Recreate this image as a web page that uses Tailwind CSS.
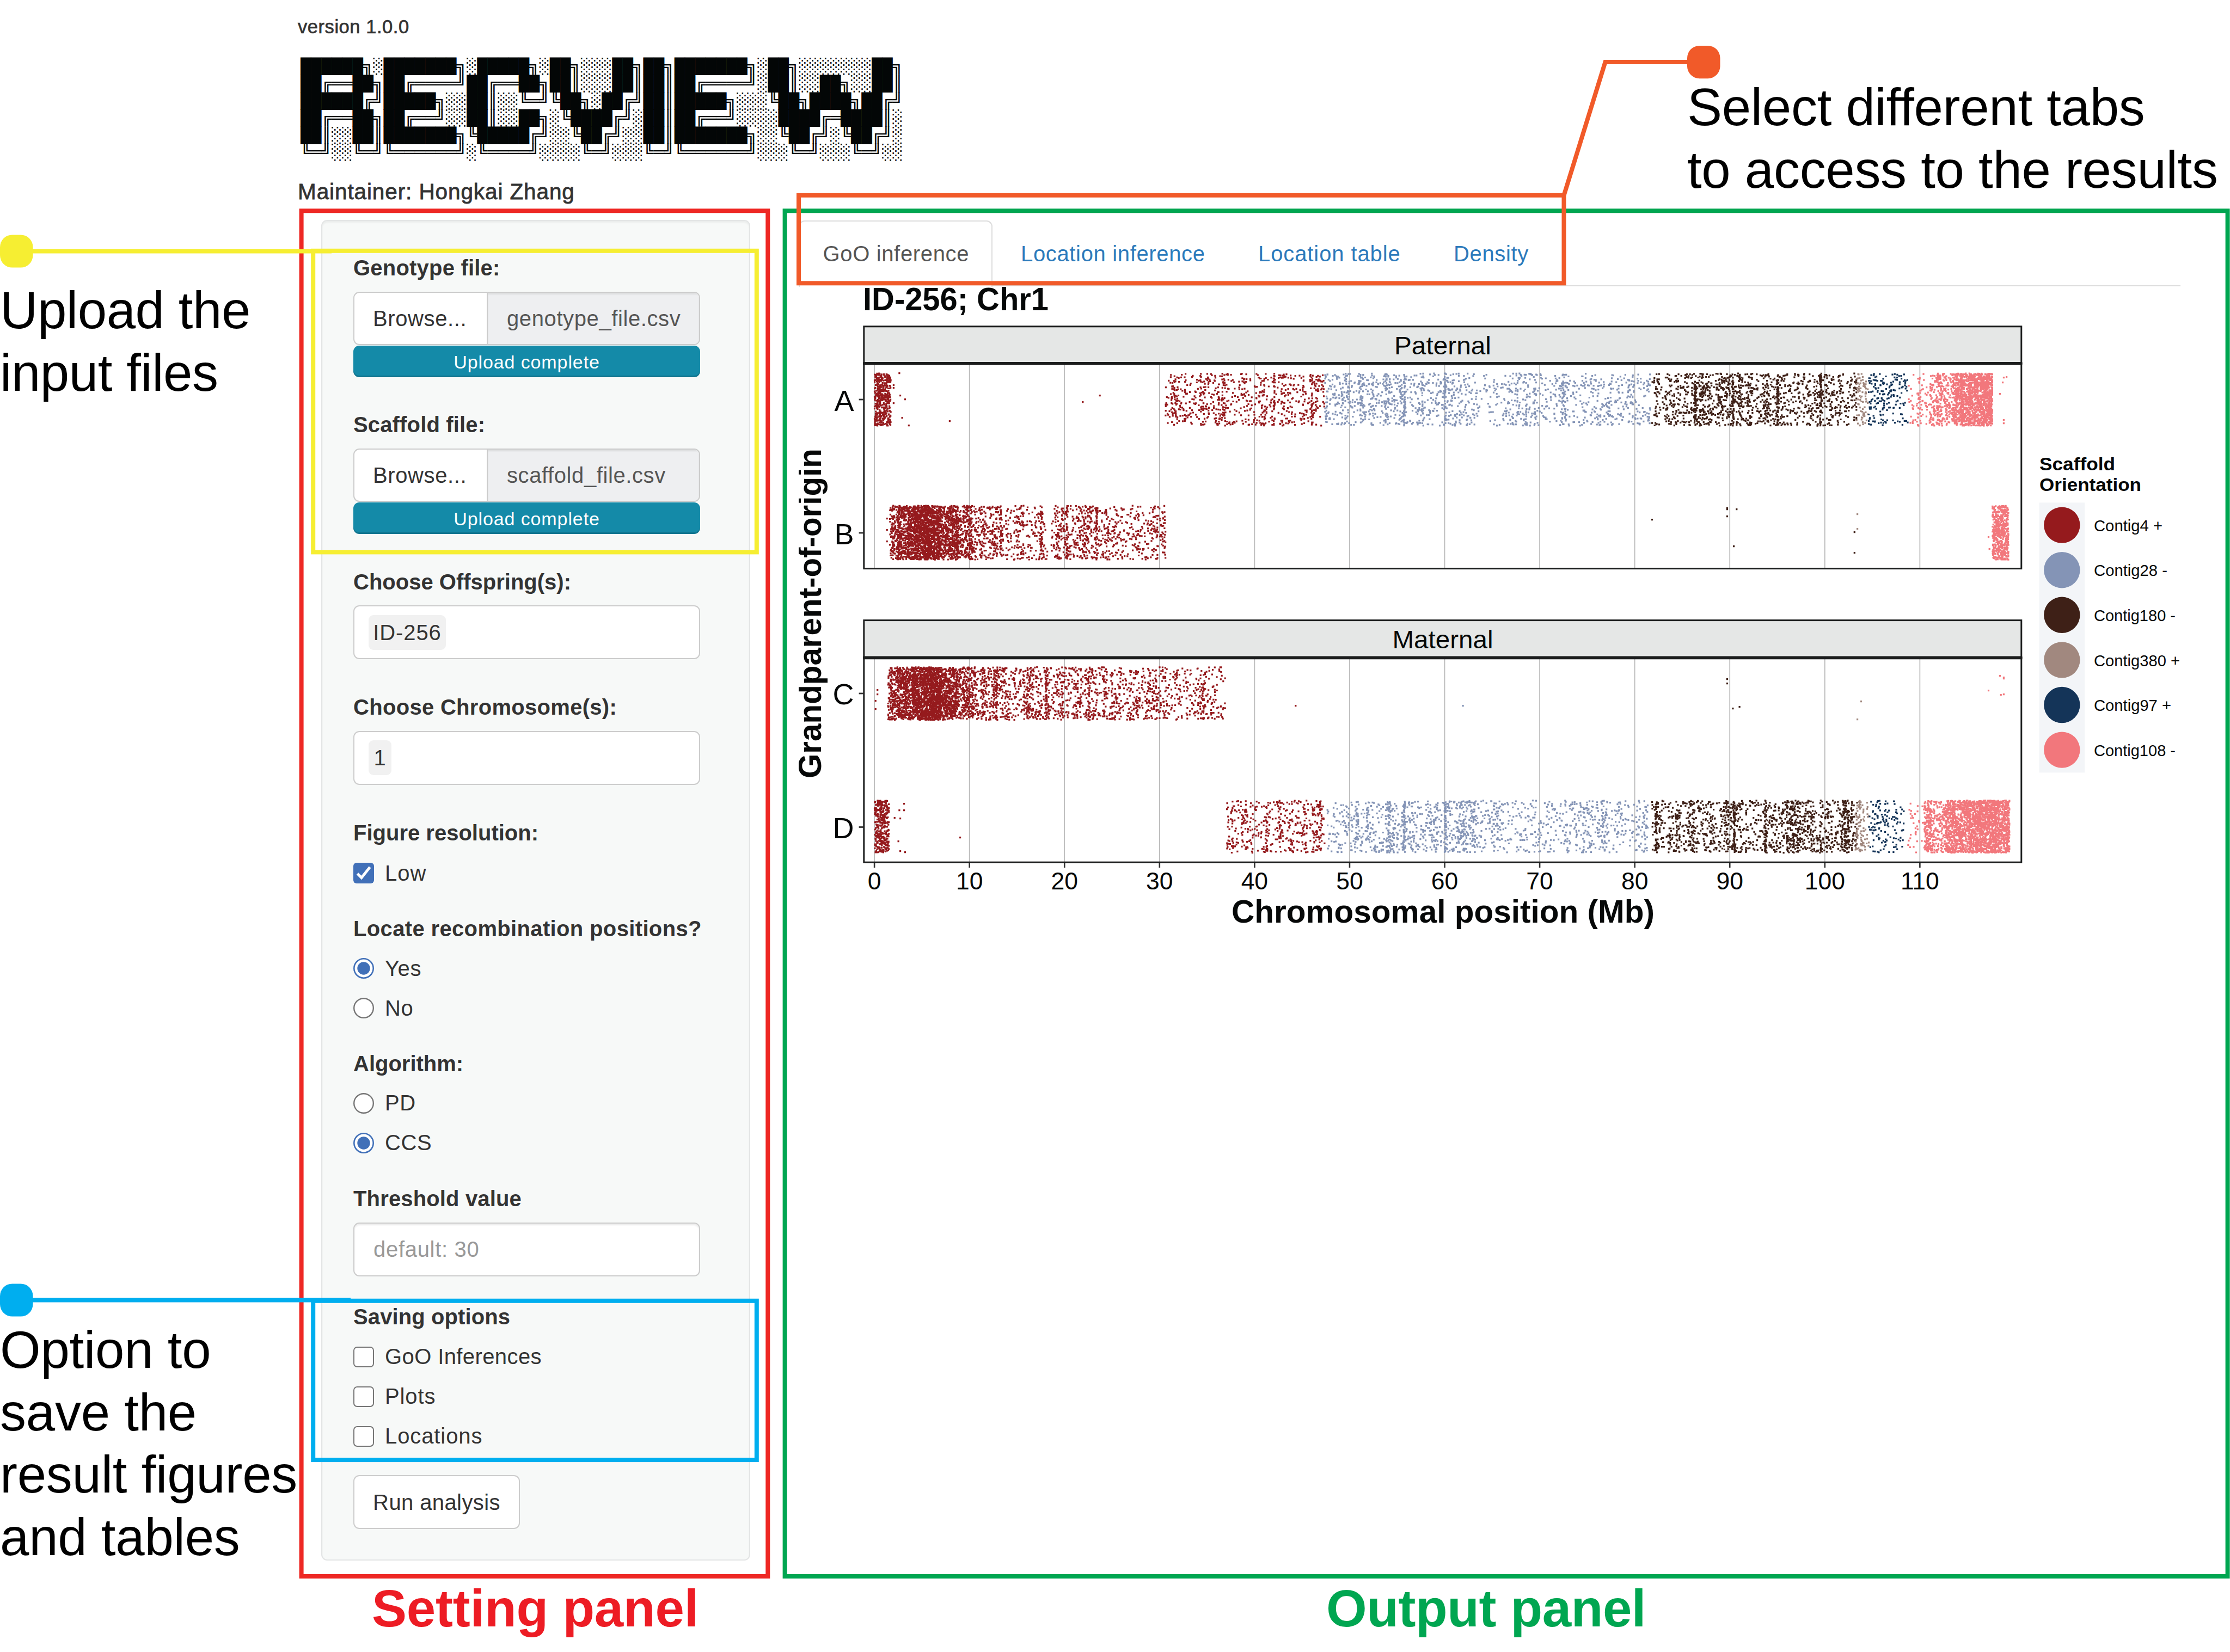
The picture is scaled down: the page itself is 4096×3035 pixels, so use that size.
<!DOCTYPE html>
<html lang="en">
<head>
<meta charset="utf-8">
<title>RecView</title>
<script src="https://cdn.jsdelivr.net/npm/@tailwindcss/browser@4"></script>
</head>
<body class="relative h-[3035px] w-[4096px] overflow-hidden bg-white font-['Liberation_Sans',Arial,sans-serif] text-[40px] leading-[57px] whitespace-nowrap text-[#333]">

<!-- Application page -->
<div class="pl-[547px]">
  <header class="h-[383px]">
    <h5 class="pt-[27px] text-[34.5px] leading-[44px] tracking-[0.55px] [-webkit-text-stroke:0.7px_#333]">version 1.0.0</h5>
    <div class="mt-[35px] ml-[5px] h-[190px]">
<pre class="origin-top-left scale-y-[0.861] font-['DejaVu_Sans_Mono',monospace] text-[31.69px] leading-[36.83px] text-[#030606]">██████╗░███████╗░█████╗░██╗░░░██╗██╗███████╗░██╗░░░░░░░██╗
██╔══██╗██╔════╝██╔══██╗██║░░░██║██║██╔════╝░██║░░██╗░░██║
██████╔╝█████╗░░██║░░╚═╝╚██╗░██╔╝██║█████╗░░░╚██╗████╗██╔╝
██╔══██╗██╔══╝░░██║░░██╗░╚████╔╝░██║██╔══╝░░░░████╔═████║░
██║░░██║███████╗╚█████╔╝░░╚██╔╝░░██║███████╗░░╚██╔╝░╚██╔╝░
╚═╝░░╚═╝╚══════╝░╚════╝░░░░╚═╝░░░╚═╝╚══════╝░░░╚═╝░░░╚═╝░░</pre>
    </div>
    <h4 class="pt-[28px] text-[40.5px] leading-[56px] tracking-[0.9px] [-webkit-text-stroke:0.8px_#333]">Maintainer: Hongkai Zhang</h4>
  </header>

  <div class="flex items-start pt-[21px]">
    <!-- Settings -->
    <form class="ml-[43px] h-[2463px] w-[788px] shrink-0 rounded-[11px] border-[2.5px] border-[#e3e5e5] bg-[#f7f9f8] pt-[54px] pl-[57px] tracking-[0.6px] shadow-[inset_0_3px_3px_rgba(0,0,0,0.05)]">
      <div class="h-[288.4px]">
        <label class="block h-[75.5px] pt-[4px] font-bold tracking-[0.2px]">Genotype file:</label>
        <div class="flex h-[98px] w-[637px] overflow-hidden rounded-[11px] border-[2.8px] border-[#ccc] bg-white leading-[94px]">
          <span class="w-[245px] shrink-0 border-r-[2.8px] border-[#ccc] pl-[34px] tracking-[0.6px]">Browse...</span>
          <span class="flex-1 bg-[#eeeff1] pl-[35px] text-[#555] shadow-[inset_0_3px_3px_rgba(0,0,0,0.075)]">genotype_file.csv</span>
        </div>
        <div class="mt-px h-[58px] w-[637px] rounded-[11px] bg-[#148aa8] text-center text-[34px] leading-[60px] tracking-[0.9px] text-white shadow-[inset_0_-3px_0_rgba(0,0,0,0.15)]">Upload complete</div>
      </div>
      <div class="h-[288.4px]">
        <label class="block h-[75.5px] pt-[4px] font-bold tracking-[0.15px]">Scaffold file:</label>
        <div class="flex h-[98px] w-[637px] overflow-hidden rounded-[11px] border-[2.8px] border-[#ccc] bg-white leading-[94px]">
          <span class="w-[245px] shrink-0 border-r-[2.8px] border-[#ccc] pl-[34px] tracking-[0.6px]">Browse...</span>
          <span class="flex-1 bg-[#eeeff1] pl-[35px] text-[#555] shadow-[inset_0_3px_3px_rgba(0,0,0,0.075)]">scaffold_file.csv</span>
        </div>
        <div class="mt-px h-[58px] w-[637px] rounded-[11px] bg-[#148aa8] text-center text-[34px] leading-[60px] tracking-[0.9px] text-white shadow-[inset_0_-3px_0_rgba(0,0,0,0.15)]">Upload complete</div>
      </div>
      <div class="h-[230.6px]">
        <label class="block h-[75.5px] pt-[4px] font-bold tracking-normal">Choose Offspring(s):</label>
        <div class="flex h-[99px] w-[637px] items-center rounded-[11px] border-[2.8px] border-[#ccc] bg-white pl-[26px]"><span class="h-[64px] w-[142px] rounded-[9px] bg-[#f1f1f1] text-center leading-[65px] tracking-[0.9px]">ID-256</span></div>
      </div>
      <div class="h-[230.7px]">
        <label class="block h-[75.5px] pt-[4px] font-bold tracking-[0.3px]">Choose Chromosome(s):</label>
        <div class="flex h-[99px] w-[637px] items-center rounded-[11px] border-[2.8px] border-[#ccc] bg-white pl-[26px]"><span class="h-[64px] w-[42px] rounded-[9px] bg-[#f1f1f1] text-center leading-[65px]">1</span></div>
      </div>
      <div class="h-[176px]">
        <label class="block h-[77.5px] pt-[4px] font-bold tracking-normal">Figure resolution:</label>
        <div class="flex items-center gap-[20px] tracking-[1px]">
          <svg class="size-[38px]" viewBox="0 0 38 38"><rect width="38" height="38" rx="6" fill="#4170b8"/><path d="M7.500 20L15 27.500L30.500 8" fill="none" stroke="#fff" stroke-width="5"/></svg>Low
        </div>
      </div>
      <div class="h-[248.8px]">
        <label class="block h-[76.7px] pt-[3.5px] font-bold tracking-[0.35px]">Locate recombination positions?</label>
        <div class="flex h-[57px] items-center gap-[20px]"><svg class="size-[38px]" viewBox="0 0 38 38"><circle cx="19" cy="19" r="17.7" fill="#fff" stroke="#4170b8" stroke-width="2.6"/><circle cx="19" cy="19" r="11.7" fill="#4170b8"/></svg>Yes</div>
        <div class="mt-[16px] flex h-[57px] items-center gap-[20px]"><svg class="size-[38px]" viewBox="0 0 38 38"><circle cx="19" cy="19" r="17.8" fill="#fff" stroke="#767676" stroke-width="2.4"/></svg>No</div>
      </div>
      <div class="h-[248.1px]">
        <label class="block h-[75.3px] pt-[3px] font-bold tracking-normal">Algorithm:</label>
        <div class="flex h-[57px] items-center gap-[20px]"><svg class="size-[38px]" viewBox="0 0 38 38"><circle cx="19" cy="19" r="17.8" fill="#fff" stroke="#767676" stroke-width="2.4"/></svg>PD</div>
        <div class="mt-[16px] flex h-[57px] items-center gap-[20px]"><svg class="size-[38px]" viewBox="0 0 38 38"><circle cx="19" cy="19" r="17.7" fill="#fff" stroke="#4170b8" stroke-width="2.6"/><circle cx="19" cy="19" r="11.7" fill="#4170b8"/></svg>CCS</div>
      </div>
      <div class="h-[217.1px]">
        <label class="block h-[75.5px] pt-[3.5px] font-bold tracking-[0.15px]">Threshold value</label>
        <div class="h-[99px] w-[637px] rounded-[11px] border-[2.8px] border-[#ccc] bg-white pl-[35px] leading-[94px] tracking-[0.7px] text-[#999] shadow-[inset_0_3px_3px_rgba(0,0,0,0.075)]">default: 30</div>
      </div>
      <div class="h-[322px]">
        <label class="block h-[76px] pt-[3px] font-bold tracking-[0.1px]">Saving options</label>
        <div class="flex h-[57px] items-center gap-[20px] tracking-[0.4px]"><span class="size-[38px] rounded-[7px] border-[2.6px] border-[#767676] bg-white"></span>GoO Inferences</div>
        <div class="mt-[16px] flex h-[57px] items-center gap-[20px] tracking-[0.9px]"><span class="size-[38px] rounded-[7px] border-[2.6px] border-[#767676] bg-white"></span>Plots</div>
        <div class="mt-[16px] flex h-[57px] items-center gap-[20px] tracking-[0.9px]"><span class="size-[38px] rounded-[7px] border-[2.6px] border-[#767676] bg-white"></span>Locations</div>
      </div>
      <button type="button" class="block h-[99px] w-[306px] rounded-[11px] border-[2.8px] border-[#ccc] bg-white leading-[94px] tracking-[0.4px]">Run analysis</button>
    </form>

    <!-- Results -->
    <main class="ml-[89px] w-[2538px]">
      <nav class="flex h-[122px] items-end border-b-[2.8px] border-[#ddd] leading-[123px] tracking-[0.65px] text-[#2c7abb]">
        <a class="-mb-[2.8px] h-[122px] w-[356px] rounded-t-[11px] border-[2.8px] border-b-0 border-[#ddd] bg-white pl-[42.5px] leading-[118px] text-[#555]">GoO inference</a>
        <a class="ml-[52px] h-[119px] w-[436px]">Location inference</a>
        <a class="h-[119px] w-[359px] tracking-[0.9px]">Location table</a>
        <a class="h-[119px]">Density</a>
      </nav>
      <svg id="plot" class="block h-[1184px] w-[2559px] font-['Liberation_Sans',Arial,sans-serif]" viewBox="1467 526 2559 1184"></svg>
    </main>
  </div>
</div>

<!-- Figure annotations -->
<svg class="absolute inset-0 h-[3035px] w-[4096px]" viewBox="0 0 4096 3035" fill="none" stroke-width="8">
  <rect x="553.6" y="387.3" width="856.7" height="2508.7" stroke="#ee2824"/>
  <rect x="1441.6" y="387.3" width="2650" height="2508.7" stroke="#00a651"/>
  <rect x="575.2" y="460.8" width="814.6" height="553.6" stroke="#f6ee32"/>
  <path d="M30 461.5H609" stroke="#f6ee32"/>
  <rect x="0" y="431.4" width="60.5" height="60.2" rx="22.5" fill="#f6ee32"/>
  <rect x="575.2" y="2389.8" width="814.6" height="292.3" stroke="#00aeef"/>
  <path d="M30 2388.5H644" stroke="#00aeef"/>
  <rect x="0" y="2358.4" width="60.5" height="60.2" rx="22.5" fill="#00aeef"/>
  <rect x="1467" y="358.8" width="1405.500" height="161.500" stroke="#f15a29"/>
  <path d="M2872.500 359L2948.500 114H3130" stroke="#f15a29"/>
  <rect x="3099" y="84" width="60.5" height="60.2" rx="22.5" fill="#f15a29"/>
</svg>
<p class="absolute top-[513px] left-0 text-[96px] leading-[114.5px] tracking-[-0.45px] whitespace-pre text-black">Upload the
input files</p>
<p class="absolute top-[2423px] left-0 text-[96px] leading-[114.5px] tracking-[-0.25px] whitespace-pre text-black">Option to
save the
result figures
and tables</p>
<p class="absolute top-[140px] left-[3099px] text-[96px] leading-[114.5px] tracking-[-0.3px] whitespace-pre text-black">Select different tabs
to access to the results</p>
<p class="absolute top-[2898px] left-[683px] text-[96px] leading-[114px] font-bold tracking-[-0.2px] text-[#ed1c24]">Setting panel</p>
<p class="absolute top-[2898px] left-[2436px] text-[96px] leading-[114px] font-bold tracking-[-0.4px] text-[#00a651]">Output panel</p>

<script>
const X = mb => 1606.1 + mb * 17.457;
const rows = { A: [684.5, 783.5], B: [927.6, 1029.5], C: [1224, 1324], D: [1469, 1568] };
const colors = { r: '#951a1d', b: '#8494b6', k: '#3e2017', t: '#a1887f', n: '#143458', p: '#f2777c' };
const out = [];
const line = (x1, y1, x2, y2, c, w) => out.push(`<path d="M${x1} ${y1}L${x2} ${y2}" stroke="${c}" stroke-width="${w}"/>`);
const text = (x, y, s, size, len, extra = '') => out.push(`<text x="${x}" y="${y}" font-size="${size}" fill="#060808" ${len ? `textLength="${len}" lengthAdjust="spacingAndGlyphs"` : ''} ${extra}>${s}</text>`);

for (let m = 0; m <= 110; m += 10) {
  line(X(m), 669, X(m), 1044, '#b9b9b9', 1.7);
  line(X(m), 1210, X(m), 1584, '#b9b9b9', 1.7);
  line(X(m), 1585, X(m), 1594, '#333', 2.6);
  text(X(m), 1633.5, m, 44.5, 0, 'text-anchor="middle"');
}

// Small deterministic generator, so that the jitter is the same on every load.
let seed = 20231;
const rnd = () => { seed = (seed * 1664525 + 1013904223) >>> 0; return seed / 4294967296; };
const paths = {};
const dot = (c, x, y) => { paths[c] = (paths[c] || '') + `M${x.toFixed(1)} ${y.toFixed(1)}h3.2v3.2h-3.2z`; };
// [row, from Mb, to Mb, points, colour]
const segments = [
  ['A',0,1.7,450,'r'],['A',30.6,38,360,'r'],['A',38,47.4,370,'r'],['A',47.4,63,760,'b'],['A',63,81.6,670,'b'],['A',81.8,84,100,'k'],['A',84,99.8,1020,'k'],['A',99.8,103.3,170,'k'],['A',103.2,104.5,75,'t'],['A',104.6,108.7,180,'n'],
  ['A',108.8,111,75,'p'],['A',111,114.5,520,'p'],['A',114.2,117.6,1250,'p'],
  ['B',1.6,2.6,150,'r'],['B',2.4,8.8,1750,'r'],['B',4,7,450,'r'],['B',8.6,10.3,280,'r'],['B',10.3,13.3,250,'r'],['B',13.3,18.2,230,'r'],['B',18.6,26,450,'r'],['B',26,30.6,210,'r'],['B',117.6,119.3,520,'p'],
  ['C',1.4,2.4,170,'r'],['C',2.4,8.7,1850,'r'],['C',4,7,450,'r'],['C',8.7,10.6,300,'r'],['C',10.6,13.1,220,'r'],['C',13.1,25,760,'r'],['C',25,36.9,560,'r'],
  ['D',0,1.5,350,'r'],['D',37,47.4,460,'r'],['D',47.6,50.5,85,'b'],['D',50.5,64.5,740,'b'],['D',64.5,81.4,570,'b'],['D',81.8,103.4,1350,'k'],['D',103.2,104.6,90,'t'],['D',104.6,108.3,130,'n'],
  ['D',108.6,110.4,30,'p'],['D',110.4,113,360,'p'],['D',112.7,119.4,1950,'p'],['D',115,118,300,'p']
];
for (const [row, a, b, n, c] of segments) {
  const [y0, y1] = rows[row];
  const dense = n / (b - a) > 150;
  const centres = Array.from({ length: Math.max(2, Math.round((b - a) * 0.9)) }, () => a + rnd() * (b - a));
  for (let i = 0; i < n; i++) {
    let m = a + rnd() * (b - a);
    if (rnd() < (dense ? 0.08 : 0.28)) m = centres[Math.floor(rnd() * centres.length)] + (rnd() - 0.5) * 0.5;
    m = Math.min(b, Math.max(a, m));
    dot(c, X(m) - 1.2, y0 + rnd() * (y1 - y0 - 3));
  }
}
// Narrow columns where many markers share a position.
for (const [row, m, n, c] of [['A',55.7,45,'b'],['A',60,35,'b'],['A',86.3,45,'k'],['A',90.3,45,'k'],['A',95,50,'k'],['A',99.5,50,'k'],['A',46,25,'r'],['A',42,25,'r'],
  ['B',23.3,40,'r'],['B',20.2,30,'r'],['B',17.5,25,'r'],['C',18,35,'r'],['C',22.5,30,'r'],['C',12.8,30,'r'],['D',55.7,45,'b'],['D',60,50,'b'],['D',90.4,60,'k'],['D',93.7,40,'k'],['D',96,40,'k'],['D',82.2,40,'k'],['D',41.2,20,'r']]) {
  const [y0, y1] = rows[row];
  for (let i = 0; i < n; i++) dot(c, X(m) - 2 + rnd() * 3, y0 + rnd() * (y1 - y0 - 3));
}
// Isolated points: [colour, Mb, y]
for (const [c, m, y] of [['r',2.6,684],['r',2,706],['r',2,711],['r',2.7,725],['r',3.2,732],['r',2,739],['r',2.9,766],['r',3.6,780],['r',7.9,772],['r',23.7,725],['r',21.9,737],
  ['r',1.3,951],['r',1.3,972],['r',1.3,993],['r',.3,1266],['r',.3,1274],['r',.1,1286],['r',.1,1301],['r',44.3,1295],
  ['r',3.1,1475],['r',2.6,1487],['r',3.1,1487],['r',2.1,1501],['r',2.7,1502],['r',9,1537],['r',2.5,1544],['r',2.7,1562],['r',3.2,1564],
  ['p',118.8,692],['p',119.1,691],['p',118.7,701],['p',118.4,722],['p',118.8,770],['p',118.8,776],['p',117.2,985],['p',117.3,1007],
  ['k',81.8,953],['k',89.7,932],['k',89.7,934],['k',90.7,934],['k',89.7,947],['k',90.4,1002],['t',103.4,943],['t',103.4,970],['k',103.1,976],['k',103.1,1014],
  ['b',61.9,1295],['k',89.7,1246],['k',89.7,1254],['k',91,1297],['k',90.3,1300],['t',103.8,1287],['t',103.4,1320],['p',118.4,1240],['p',118.8,1243],['p',118.8,1245],['p',117.2,1267],['p',118.5,1275],['p',118.8,1274]]) dot(c, X(m) - 1.2, y);
for (const c in paths) out.push(`<path d="${paths[c]}" fill="${colors[c]}"/>`);

for (const [top, mid, bottom, name, nx, len] of [[599.8, 667.8, 1044.6, 'Paternal', 2560.5, 178], [1139.6, 1208.4, 1584.2, 'Maternal', 2557, 185]]) {
  out.push(`<rect x="1586.8" y="${top}" width="2126" height="${mid - top}" fill="#e5e7e6" stroke="#1b1d1d" stroke-width="3"/>`);
  out.push(`<rect x="1586.8" y="${mid}" width="2126" height="${bottom - mid}" fill="none" stroke="#1b1d1d" stroke-width="3"/>`);
  line(1585.3, mid, 3714.3, mid, '#1b1d1d', 5.6);
  text(nx + 0.5, top + 51, name, 46, len);
}
for (const [l, y, b] of [['A', 734, 755], ['B', 979, 1000], ['C', 1274, 1294], ['D', 1519.5, 1539.5]]) {
  line(1577.6, y, 1586, y, '#333', 2.8);
  text(1568.5, b, l, 54, 0, 'text-anchor="end"');
}
text(1585, 570.3, 'ID-256; Chr1', 58.5, 341, 'font-weight="bold"');
text(2262, 1694.5, 'Chromosomal position (Mb)', 58.5, 777, 'font-weight="bold"');
text(0, 0, 'Grandparent-of-origin', 58.5, 606, 'font-weight="bold" transform="translate(1507.6 1430) rotate(-90)"');

text(3746, 864, 'Scaffold', 34, 139, 'font-weight="bold"');
text(3746, 901.7, 'Orientation', 34, 187, 'font-weight="bold"');
out.push('<rect x="3745.5" y="923.4" width="83.5" height="496" fill="#f3f5f8"/>');
[['Contig4 +', 'r', 126], ['Contig28 -', 'b', 135], ['Contig180 -', 'k', 150], ['Contig380 +', 't', 158], ['Contig97 +', 'n', 142], ['Contig108 -', 'p', 150]].forEach(([s, c, len], i) => {
  const y = 964.6 + i * 82.6;
  out.push(`<circle cx="3787.3" cy="${y}" r="33.2" fill="${colors[c]}"/>`);
  text(3846, y + 11.2, s, 29, len);
});
document.getElementById('plot').innerHTML = out.join('');
</script>
</body>
</html>
